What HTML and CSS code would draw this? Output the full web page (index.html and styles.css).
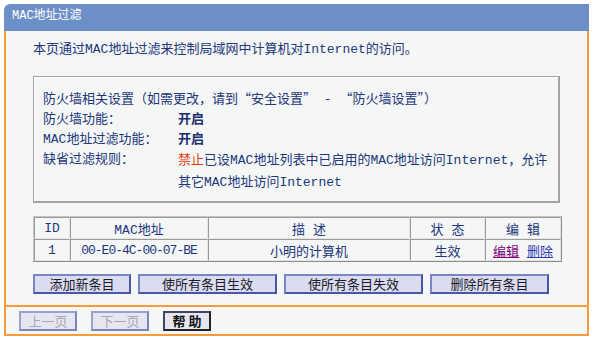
FILE: index.html
```html
<!DOCTYPE html>
<html lang="zh-CN">
<head>
    <meta charset="UTF-8">
    <title>MAC地址过滤</title>
    <link rel="stylesheet" href="styles.css">
</head>
<body>
    <div class="panel">
        <div class="panel-title">MAC地址过滤</div>

        <div class="panel-body">
            <p class="intro">本页通过MAC地址过滤来控制局域网中计算机对Internet的访问。</p>

            <div class="settings">
                <div class="settings-head">防火墙相关设置（如需更改，请到<span class="cjk">“安全设置”</span> - <span class="cjk">“防火墙设置”</span>）</div>
                <div class="row">
                    <span class="label">防火墙功能：</span>
                    <span class="value on">开启</span>
                </div>
                <div class="row">
                    <span class="label">MAC地址过滤功能：</span>
                    <span class="value on">开启</span>
                </div>
                <div class="row">
                    <span class="label">缺省过滤规则：</span>
                    <span class="value rule"><span class="deny">禁止</span>已设MAC地址列表中已启用的MAC地址访问Internet，允许<br>其它MAC地址访问Internet</span>
                </div>
            </div>

            <table class="list">
                <colgroup>
                    <col class="c-id">
                    <col class="c-mac">
                    <col class="c-desc">
                    <col class="c-state">
                    <col class="c-edit">
                </colgroup>
                <tr>
                    <th>ID</th>
                    <th>MAC地址</th>
                    <th>描 述</th>
                    <th>状 态</th>
                    <th>编 辑</th>
                </tr>
                <tr>
                    <td>1</td>
                    <td class="mac">00-E0-4C-00-07-BE</td>
                    <td>小明的计算机</td>
                    <td>生效</td>
                    <td><a href="#" class="visited">编辑</a> <a href="#">删除</a></td>
                </tr>
            </table>

            <div class="actions">
                <button class="btn w-add">添加新条目</button>
                <button class="btn w-all">使所有条目生效</button>
                <button class="btn w-all">使所有条目失效</button>
                <button class="btn w-del">删除所有条目</button>
            </div>
        </div>

        <div class="panel-foot">
            <button class="btn small" disabled>上一页</button>
            <button class="btn small" disabled>下一页</button>
            <button class="btn help">帮 助</button>
        </div>
    </div>
</body>
</html>
```

FILE: styles.css
```css
* {
    margin: 0;
    padding: 0;
    box-sizing: border-box;
}

body {
    background: #ffffff;
    padding: 4px 0 0 4px;
    font-family: "Liberation Mono", "Noto Sans CJK SC", monospace;
    font-size: 13px;
    color: #22367a;
}

.panel {
    width: 585px;
}

.panel-title {
    height: 27px;
    line-height: 25px;
    padding-left: 8px;
    background: #6d8fc8;
    color: #ffffff;
    font-size: 12px;
    border-top-left-radius: 6px;
}

.panel-body {
    background: #f5f7f7;
    border-left: 2px solid #f99a3a;
    border-right: 2px solid #f99a3a;
    border-bottom: 2px solid #f99a3a;
    padding: 11px 24px 11px 27px;
}

.intro {
    line-height: 16px;
    margin-bottom: 18px;
}

.settings {
    width: 527px;
    border: 1px solid #a4a4a4;
    border-right-width: 2px;
    border-bottom-width: 2px;
    padding: 11px 10px 7px 9px;
    box-shadow: inset 1px 1px 0 #ffffff;
}

.cjk {
    font-family: "Noto Sans CJK SC", sans-serif;
}

.settings-head,
.row {
    line-height: 20px;
}

.row {
    display: flex;
}

.label {
    width: 135px;
    flex-shrink: 0;
}

.on {
    font-weight: bold;
    color: #1e2f6e;
}

.rule {
    line-height: 22px;
}

.deny {
    color: #e03c10;
}

.list {
    margin-top: 13px;
    width: 527px;
    border-collapse: separate;
    border-spacing: 0;
    border: 1px solid;
    border-color: #c4c4c4 #8c8c8c #8c8c8c #c4c4c4;
    table-layout: fixed;
}

.c-id { width: 36px; }
.c-mac { width: 138px; }
.c-desc { width: 202px; }
.c-state { width: 75px; }
.c-edit { width: 76px; }

.list th,
.list td {
    height: 22px;
    text-align: center;
    font-weight: normal;
    border: 1px solid;
    border-color: #9a9a9a #e4e4e4 #e4e4e4 #9a9a9a;
    padding: 0;
}

.list td.mac {
    letter-spacing: -1px;
}

.list a {
    color: #2f3ab0;
}

.list a.visited {
    color: #800080;
}

.actions {
    display: flex;
    gap: 7px;
    margin-top: 12px;
}

.btn {
    height: 20px;
    background: #dcdcf0;
    border: 2px solid;
    border-color: #7a84c8 #4a56a8 #4a56a8 #7a84c8;
    font-family: "Noto Sans CJK SC", sans-serif;
    font-size: 13px;
    line-height: 14px;
    color: #1a1a2a;
    padding: 0;
}

.w-add { width: 98px; }
.w-all { width: 139px; }
.w-del { width: 119px; }

.panel-foot {
    display: flex;
    gap: 14px;
    height: 29px;
    padding: 4px 0 0 13px;
    background: #f5f7f7;
    border-left: 2px solid #f99a3a;
    border-right: 2px solid #f99a3a;
    border-bottom: 2px solid #f99a3a;
}

.btn.small {
    width: 58px;
    background: #e6e6f0;
    border-color: #9aa0d0 #7c84c0 #7c84c0 #9aa0d0;
    color: #a8a8b8;
}

.btn.help {
    width: 48px;
    background: #e6e6f0;
    border-color: #44446a #222 #222 #44446a;
    font-weight: bold;
    color: #111;
}
```
